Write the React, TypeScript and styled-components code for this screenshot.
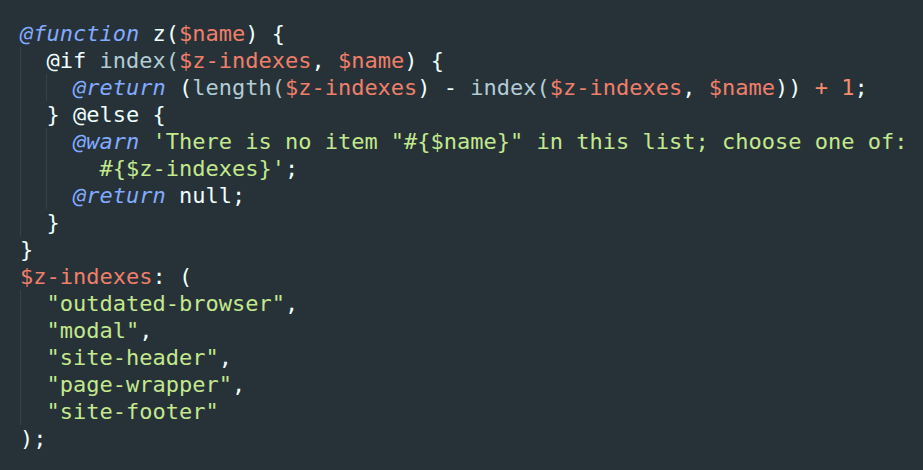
import React from "react";
import styled, { createGlobalStyle, css } from "styled-components";

const Global = createGlobalStyle`
  html, body { margin: 0; padding: 0; background: #263238; }
  body { width: 923px; height: 470px; overflow: hidden; }
`;

type Kind = "kw" | "plain" | "fn" | "var" | "num" | "str" | "ctl";
type Tok = [Kind, string];

const colors: Record<Kind, string> = {
  kw: "#82aaff",
  plain: "#eeffff",
  fn: "#b2ccd6",
  var: "#f07f6a",
  num: "#f78c6c",
  str: "#c3e88d",
  ctl: "#eeffff",
};

const Editor = styled.div`
  box-sizing: border-box;
  width: 923px;
  height: 470px;
  background: #263238;
  padding: 20px 0 0 20px;
  font-family: "DejaVu Sans Mono", "Liberation Mono", monospace;
  font-size: 22px;
  line-height: 27px;
  color: #eeffff;
  display: flex;
  flex-direction: column;
`;

const Line = styled.div`
  display: flex;
  white-space: pre;
  height: 27px;
`;

const Indent = styled.span`
  display: inline-block;
  width: 2ch;
  height: 27px;
  box-sizing: border-box;
  border-left: 1px solid #344249;
`;

const Token = styled.span<{ $kind: Kind }>`
  color: ${(p) => colors[p.$kind]};
  ${(p) =>
    p.$kind === "kw" &&
    css`
      font-style: italic;
    `}
`;

const lines: { indent: number; toks: Tok[] }[] = [
  { indent: 0, toks: [["kw", "@function"], ["plain", " z("], ["var", "$name"], ["plain", ") {"]] },
  {
    indent: 1,
    toks: [["ctl", "@if "], ["fn", "index("], ["var", "$z-indexes"], ["plain", ", "], ["var", "$name"], ["plain", ") {"]],
  },
  {
    indent: 2,
    toks: [
      ["kw", "@return"],
      ["plain", " ("],
      ["fn", "length("],
      ["var", "$z-indexes"],
      ["plain", ") - "],
      ["fn", "index("],
      ["var", "$z-indexes"],
      ["plain", ", "],
      ["var", "$name"],
      ["plain", ")) "],
      ["num", "+ 1"],
      ["plain", ";"],
    ],
  },
  { indent: 1, toks: [["plain", "} @else {"]] },
  {
    indent: 2,
    toks: [["kw", "@warn"], ["plain", " "], ["str", "'There is no item \"#{$name}\" in this list; choose one of:"]],
  },
  { indent: 2, toks: [["str", "  #{$z-indexes}'"], ["plain", ";"]] },
  { indent: 2, toks: [["kw", "@return"], ["plain", " null;"]] },
  { indent: 1, toks: [["plain", "}"]] },
  { indent: 0, toks: [["plain", "}"]] },
  { indent: 0, toks: [["var", "$z-indexes"], ["plain", ": ("]] },
  { indent: 1, toks: [["str", "\"outdated-browser\""], ["plain", ","]] },
  { indent: 1, toks: [["str", "\"modal\""], ["plain", ","]] },
  { indent: 1, toks: [["str", "\"site-header\""], ["plain", ","]] },
  { indent: 1, toks: [["str", "\"page-wrapper\""], ["plain", ","]] },
  { indent: 1, toks: [["str", "\"site-footer\""]] },
  { indent: 0, toks: [["plain", ");"]] },
];

export default function App() {
  return (
    <>
      <Global />
      <Editor>
        {lines.map((l, i) => (
          <Line key={i}>
            {Array.from({ length: l.indent }).map((_, j) => (
              <Indent key={j} />
            ))}
            {l.toks.map(([k, t], j) => (
              <Token key={j} $kind={k}>
                {t}
              </Token>
            ))}
          </Line>
        ))}
      </Editor>
    </>
  );
}
